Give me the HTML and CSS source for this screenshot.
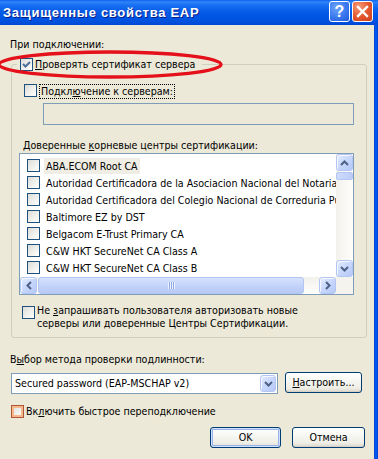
FILE: index.html
```html
<!DOCTYPE html>
<html lang="ru">
<head>
<meta charset="utf-8">
<title>Защищенные свойства EAP</title>
<link rel="stylesheet" href="styles.css">
</head>
<body>
<div class="window">
  <div class="titlebar">
    <span class="title">Защищенные свойства EAP</span>
    <div class="tbtns">
      <span class="tb help">?</span>
      <span class="tb close"><svg width="13" height="13" viewBox="0 0 13 13"><path d="M2 2 L11 11 M11 2 L2 11" stroke="#fff" stroke-width="2.4" stroke-linecap="square"/></svg></span>
    </div>
  </div>
  <div class="body">
    <div class="content">
      <div class="lbl top-lbl">При подключении:</div>
      <fieldset class="group">
        <legend class="legend"><span class="cbrow"><span class="cb checked"><svg width="11" height="11" viewBox="0 0 11 11"><path d="M2 5 L4.5 7.5 L9 3" stroke="#4b6f9c" stroke-width="2" fill="none"/></svg></span><span class="cbtext"><u>П</u>роверять сертификат сервера</span></span></legend>
        <div class="row servers"><span class="cb"></span><span class="focus">Подкл<u>ю</u>чение к серверам:</span></div>
        <div class="input"></div>
        <div class="lbl trusted">Доверенные <u>к</u>орневые центры сертификации:</div>
        <div class="list">
          <div class="items">
            <div class="item"><span class="cb"></span><span class="itext sel">ABA.ECOM Root CA</span></div>
            <div class="item"><span class="cb"></span><span class="itext">Autoridad Certificadora de la Asociacion Nacional del Notariado Mexicano</span></div>
            <div class="item"><span class="cb"></span><span class="itext">Autoridad Certificadora del Colegio Nacional de Correduria Publica Mexicana</span></div>
            <div class="item"><span class="cb"></span><span class="itext">Baltimore EZ by DST</span></div>
            <div class="item"><span class="cb"></span><span class="itext">Belgacom E-Trust Primary CA</span></div>
            <div class="item"><span class="cb"></span><span class="itext">C&amp;W HKT SecureNet CA Class A</span></div>
            <div class="item"><span class="cb"></span><span class="itext">C&amp;W HKT SecureNet CA Class B</span></div>
          </div>
          <div class="vscroll">
            <span class="sbtn"><svg width="9" height="6" viewBox="0 0 9 6"><path d="M1 5 L4.5 1.5 L8 5" stroke="#4d6185" stroke-width="2" fill="none"/></svg></span>
            <div class="vtrack"><span class="vthumb"></span></div>
            <span class="sbtn"><svg width="9" height="6" viewBox="0 0 9 6"><path d="M1 1 L4.5 4.5 L8 1" stroke="#4d6185" stroke-width="2" fill="none"/></svg></span>
          </div>
          <div class="hscroll">
            <span class="sbtn"><svg width="6" height="9" viewBox="0 0 6 9"><path d="M5 1 L1.5 4.5 L5 8" stroke="#4d6185" stroke-width="2" fill="none"/></svg></span>
            <span class="hthumb"><span class="grip"></span></span>
            <span class="htrack"></span>
            <span class="sbtn"><svg width="6" height="9" viewBox="0 0 6 9"><path d="M1 1 L4.5 4.5 L1 8" stroke="#4d6185" stroke-width="2" fill="none"/></svg></span>
          </div>
          <div class="corner"></div>
        </div>
        <div class="row note"><span class="cb"></span><span class="ntext">Не <u>з</u>апрашивать пользователя авторизовать новые<br>серверы или доверенные Центры Сертификации.</span></div>
      </fieldset>
      <div class="lbl method-lbl">В<u>ы</u>бор метода проверки подлинности:</div>
      <div class="method-row">
        <div class="select"><span class="seltext">Secured password (EAP-MSCHAP v2)</span><span class="sbtn selbtn"><svg width="9" height="6" viewBox="0 0 9 6"><path d="M1 1 L4.5 4.5 L8 1" stroke="#4d6185" stroke-width="2" fill="none"/></svg></span></div>
        <button class="btn cfg"><u>Н</u>астроить...</button>
      </div>
      <div class="row fast"><span class="cb hot"></span><span class="ftext">Вк<u>л</u>ючить быстрое переподключение</span></div>
      <div class="actions">
        <button class="btn ok">OK</button>
        <button class="btn cancel">Отмена</button>
      </div>
    </div>
    <div class="rborder"></div>
  </div>
</div>
<svg class="annot" width="232" height="34" viewBox="0 0 232 34"><ellipse cx="114" cy="16.5" rx="111" ry="12.5" fill="none" stroke="#e4101a" stroke-width="3.4"/></svg>
</body>
</html>
```
FILE: styles.css
```css
* { box-sizing: border-box; }
html, body { margin: 0; padding: 0; }
body {
  width: 378px;
  height: 459px;
  overflow: hidden;
  position: relative;
  background: #ece9d8;
  font-family: "DejaVu Sans Condensed", "DejaVu Sans", sans-serif;
  font-size: 10.6px;
  line-height: 13px;
  color: #000;
}
u { text-decoration: underline; text-underline-offset: 1px; }
.window { display: flex; flex-direction: column; width: 378px; height: 459px; }
.titlebar {
  flex: none;
  height: 25px;
  display: flex;
  align-items: flex-start;
  justify-content: space-between;
  padding: 0 5px 0 3px;
  background: linear-gradient(#0f64ee 0, #2f83f8 2px, #1a70f2 5px, #0a60ea 10px, #0056e4 16px, #0052df 21px, #0048d4 25px);
}
.title {
  margin-top: 5px;
  font-family: "Liberation Sans", Arial, sans-serif;
  font-weight: bold;
  font-size: 13px;
  line-height: 15px;
  letter-spacing: 0.7px;
  color: #fff;
  text-shadow: 1px 1px #0a1e8c;
}
.tbtns { display: flex; gap: 2px; margin-top: 1px; }
.tb {
  width: 21px; height: 21px;
  border: 1px solid #fff;
  border-radius: 3px;
  display: flex; align-items: center; justify-content: center;
}
.help {
  background: radial-gradient(circle at 35% 30%, #6ea3fb 0%, #3a78ee 55%, #1f5ad8 100%);
  color: #fff;
  font-family: "Liberation Sans", Arial, sans-serif;
  font-weight: bold;
  font-size: 16px;
}
.close {
  background: radial-gradient(circle at 30% 25%, #f59c7c 0%, #e5582f 50%, #c8401c 100%);
}
.body { flex: 1; display: flex; min-height: 0; }
.content {
  flex: 1;
  display: flex;
  flex-direction: column;
  align-items: flex-start;
  padding: 13px 7px 0 10px;
}
.rborder {
  width: 4px;
  background: linear-gradient(90deg, #0a48d8 0 1px, #0058ee 1px 3px, #0046d6 3px);
}
.lbl { height: 13px; white-space: nowrap; }
.group {
  align-self: stretch;
  margin: 6px 0 0 1px;
  padding: 0 0 7px 0;
  border: 1px solid #d0d0bf;
  border-radius: 3px;
  min-width: 0;
}
.legend { margin-left: 5px; padding: 0 7px 0 3px; line-height: 14px; }
.cbrow { display: flex; align-items: center; gap: 2px; }
.cb {
  flex: none;
  width: 13px; height: 13px;
  border: 1px solid #1c5180;
  background: linear-gradient(135deg, #dcdcd7 0%, #f2f2ef 60%, #fff 100%);
  display: flex; align-items: center; justify-content: center;
}
.cb.hot {
  border-color: #b05535;
  box-shadow: inset 0 0 0 2px #f6b68e;
}
.row { display: flex; align-items: flex-start; }
.servers { margin: 13px 0 0 12px; }
.focus { margin-left: 2px; padding: 0 1px; border: 1px dotted #000; white-space: nowrap; }
.input {
  margin: 4px 0 0 31px;
  width: 311px; height: 22px;
  border: 1px solid #7f9db9;
  background: #ece9d8;
}
.trusted { margin: 14px 0 0 11px; }
.list {
  margin: 1px 0 0 7px;
  width: 335px; height: 142px;
  border: 1px solid #7f9db9;
  background: #fff;
  display: grid;
  grid-template-columns: 1fr 17px;
  grid-template-rows: 1fr 17px;
}
.items { padding-top: 3px; overflow: hidden; min-width: 0; }
.item { height: 17px; display: flex; align-items: center; white-space: nowrap; }
.item .cb { margin-left: 7px; margin-right: 4px; }
.itext { padding: 0 2px; line-height: 16px; }
.itext.sel { background: #efede4; }
.vscroll { display: flex; flex-direction: column; background: linear-gradient(90deg, #f3f1ec, #fefefb); }
.sbtn {
  flex: none;
  width: 17px; height: 17px;
  border: 1px solid #b3c6f3;
  border-radius: 3px;
  background: linear-gradient(135deg, #e6eefd 0%, #c9d8fc 45%, #b5c9f7 100%);
  box-shadow: inset 1px 1px #f4f7fe;
  display: flex; align-items: center; justify-content: center;
}
.vtrack { flex: 1; padding-top: 1px; }
.vthumb {
  display: block;
  width: 17px; height: 8px;
  border: 1px solid #b3c6f3;
  border-radius: 2px;
  background: linear-gradient(90deg, #cddbfc, #bcccf7);
}
.hscroll { display: flex; background: linear-gradient(#f3f1ec, #fefefb); }
.hthumb {
  width: 266px; height: 17px;
  margin-left: 1px;
  border: 1px solid #b3c6f3;
  border-radius: 3px;
  background: linear-gradient(#d6e2fd, #c0d0f8 60%, #b9caf5);
  display: flex; align-items: center; justify-content: center;
}
.grip {
  width: 7px; height: 7px;
  background: repeating-linear-gradient(90deg, #eef3fe 0 1px, #8ea8e6 1px 2px);
}
.htrack { flex: 1; }
.corner { background: #f4f3ee; }
.note { margin: 9px 0 0 10px; }
.note .cb { margin-top: 2px; }
.ntext { margin-left: 2px; white-space: nowrap; }
.method-lbl { margin-top: 15px; }
.method-row { align-self: stretch; display: flex; align-items: flex-start; margin-top: 6px; }
.select {
  margin: 1px 0 0 1px;
  width: 267px; height: 21px;
  border: 1px solid #7f9db9;
  background: #fff;
  display: flex; align-items: center; justify-content: space-between;
  padding: 0 1px 0 3px;
}
.selbtn { width: 16px; height: 17px; }
.btn {
  font: inherit;
  color: #000;
  padding: 0;
  border: 1px solid #003c74;
  border-radius: 3px;
  background: linear-gradient(#ffffff 0%, #f7f7f3 40%, #eeede5 80%, #d8d5ca 100%);
  box-shadow: inset 0 -1px #d6d0c5;
  height: 21px;
}
.cfg { margin-left: auto; margin-right: 5px; width: 77px; }
.fast { margin: 11px 0 0 1px; }
.ftext { margin-left: 2px; white-space: nowrap; }
.actions { align-self: stretch; display: flex; justify-content: flex-end; gap: 11px; margin-top: 9px; padding-right: 2px; }
.ok { width: 71px; box-shadow: inset 0 0 0 1px #cee0fb, inset 0 0 0 2px #97b4ec; }
.cancel { width: 73px; }
.annot { position: absolute; left: -4px; top: 48px; pointer-events: none; }
```
